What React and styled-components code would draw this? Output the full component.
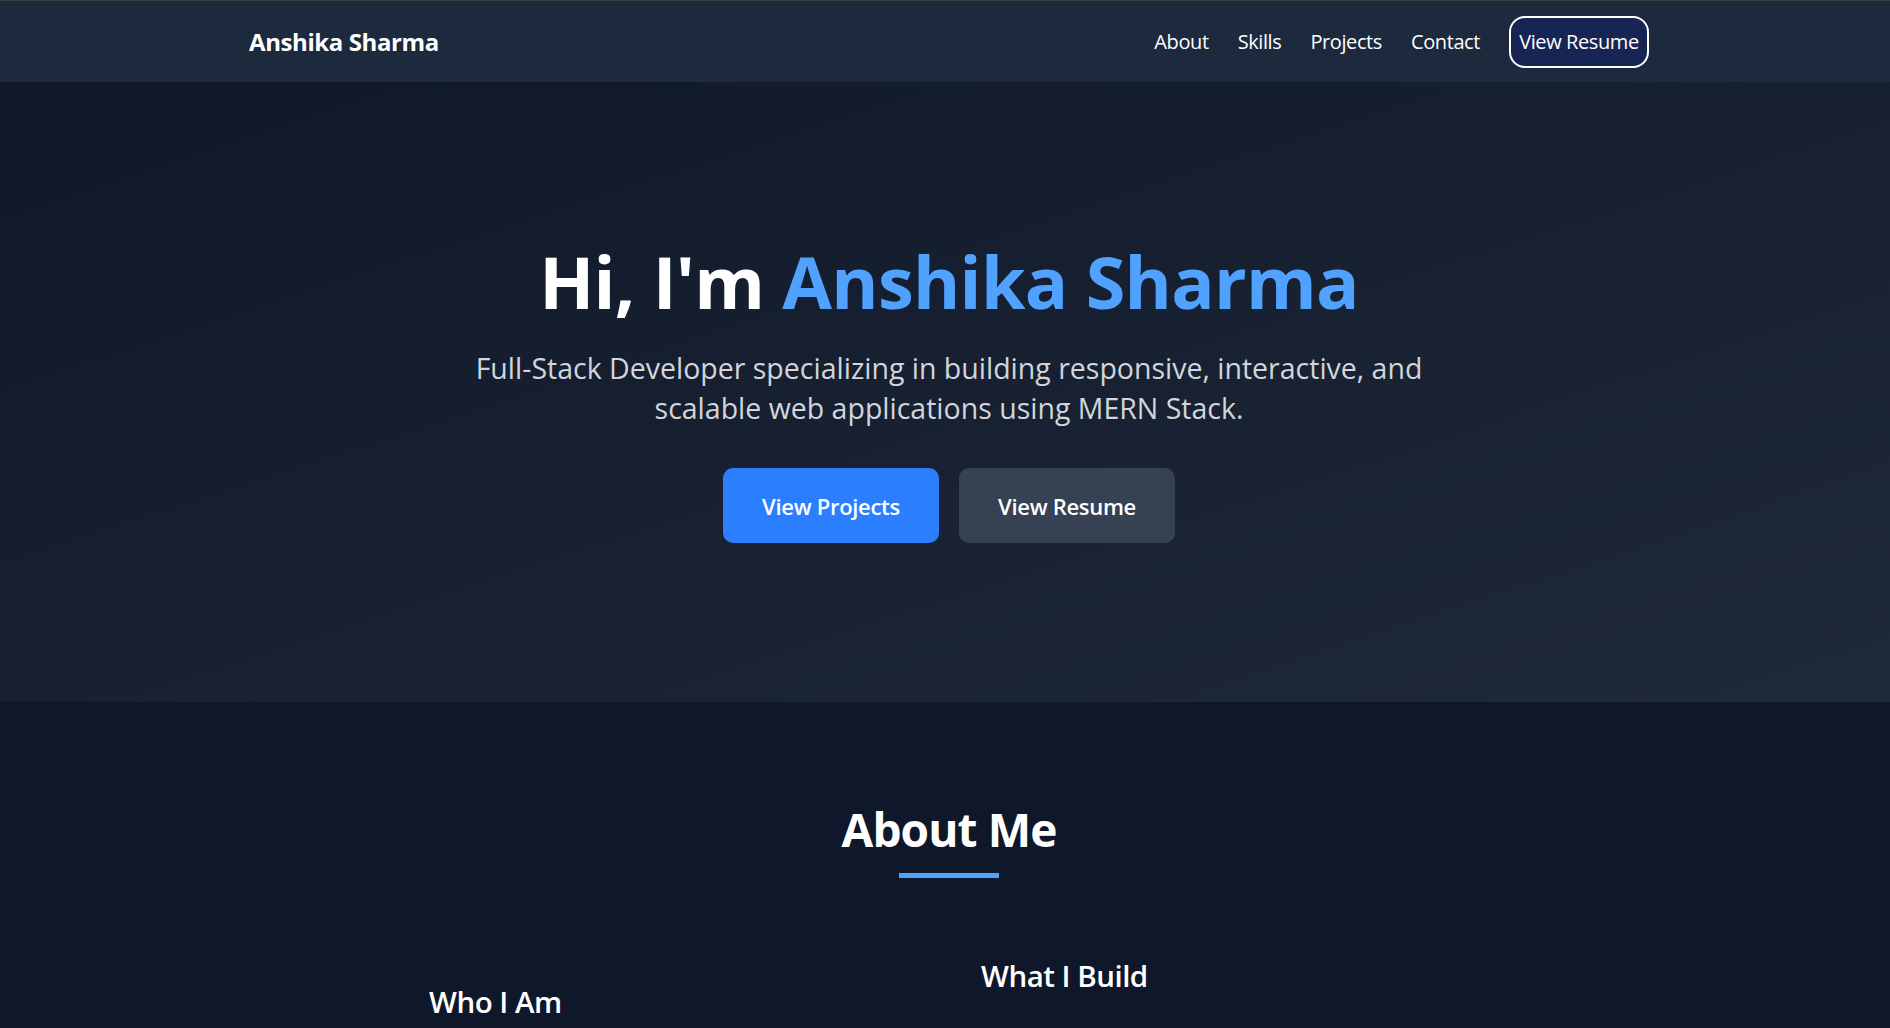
import React from 'react';
import styled, { createGlobalStyle } from 'styled-components';

const GlobalStyle = createGlobalStyle`
  * { box-sizing: border-box; }
  html, body {
    margin: 0;
    padding: 0;
    background: #0f172b;
    font-family: 'Open Sans', 'Noto Sans', sans-serif;
    color: #ffffff;
  }
`

const Navbar = styled.nav`
  height: 82px;
  background: #1d293d;
  border-top: 1px solid #3a3d44;
`

const NavInner = styled.div`
  max-width: 1408px;
  height: 100%;
  margin: 0 auto;
  padding-left: 8px;
  display: flex;
  align-items: center;
  justify-content: space-between;
`

const Brand = styled.div`
  font-size: 24px;
  font-weight: 700;
  letter-spacing: -0.4px;
`

const NavLinks = styled.div`
  display: flex;
  align-items: center;
  gap: 29px;
`

const NavLink = styled.a`
  color: #ffffff;
  font-size: 20px;
  text-decoration: none;
  letter-spacing: -0.4px;
`

const ResumeLink = styled.a`
  display: flex;
  align-items: center;
  justify-content: center;
  width: 140px;
  height: 52px;
  border: 2px solid #ffffff;
  border-radius: 16px;
  background: #172554;
  color: #ffffff;
  font-size: 20px;
  letter-spacing: -0.4px;
  text-decoration: none;
`

const Hero = styled.section`
  min-height: 620px;
  padding: 4px 0 0 8px;
  display: flex;
  flex-direction: column;
  align-items: center;
  justify-content: center;
  text-align: center;
  background: linear-gradient(to bottom right, #101828, #1e2939);
`

const HeroTitle = styled.h1`
  margin: 0;
  font-size: 72px;
  line-height: 1;
  font-weight: 700;
  letter-spacing: -0.7px;
`

const Accent = styled.span`
  color: #51a2ff;
`

const Subtitle = styled.p`
  margin: 31px 0 0;
  max-width: 1010px;
  font-size: 28.5px;
  line-height: 40px;
  color: #d1d5dc;
`

const ButtonRow = styled.div`
  display: flex;
  gap: 20px;
  margin-top: 40px;
`

const HeroButton = styled.a`
  display: flex;
  align-items: center;
  justify-content: center;
  width: 216px;
  height: 75px;
  border-radius: 10px;
  background: ${props => (props.primary ? '#2b7fff' : '#364153')};
  color: #ffffff;
  font-size: 22px;
  font-weight: 600;
  letter-spacing: -0.3px;
  text-decoration: none;
`

const About = styled.section`
  background: #0f172b;
  padding: 103px 0 80px 8px;
  display: flex;
  flex-direction: column;
  align-items: center;
`

const SectionTitle = styled.h2`
  margin: 0;
  font-size: 46px;
  line-height: 48px;
  font-weight: 700;
  letter-spacing: -0.9px;
`

const TitleBar = styled.div`
  width: 100px;
  height: 5px;
  margin-top: 20px;
  background: #51a2ff;
`

const AboutGrid = styled.div`
  width: 100%;
  max-width: 1040px;
  margin-top: 80px;
  display: grid;
  grid-template-columns: 1fr 1fr;
  gap: 64px;
`

const AboutColumn = styled.div`
  padding-top: ${props => props.offset || 0}px;
`

const ColumnTitle = styled.h3`
  margin: 0;
  font-size: 29.5px;
  line-height: 36px;
  font-weight: 600;
  letter-spacing: -0.5px;
`

export default function App() {
  return (
    <>
      <GlobalStyle />
      <Navbar>
        <NavInner>
          <Brand>Anshika Sharma</Brand>
          <NavLinks>
            <NavLink href="#about">About</NavLink>
            <NavLink href="#skills">Skills</NavLink>
            <NavLink href="#projects">Projects</NavLink>
            <NavLink href="#contact">Contact</NavLink>
            <ResumeLink href="#resume">View Resume</ResumeLink>
          </NavLinks>
        </NavInner>
      </Navbar>

      <Hero>
        <HeroTitle>
          Hi, I'm <Accent>Anshika Sharma</Accent>
        </HeroTitle>
        <Subtitle>
          Full-Stack Developer specializing in building responsive, interactive, and
          scalable web applications using MERN Stack.
        </Subtitle>
        <ButtonRow>
          <HeroButton primary href="#projects">View Projects</HeroButton>
          <HeroButton href="#resume">View Resume</HeroButton>
        </ButtonRow>
      </Hero>

      <About id="about">
        <SectionTitle>About Me</SectionTitle>
        <TitleBar />
        <AboutGrid>
          <AboutColumn offset={26}>
            <ColumnTitle>Who I Am</ColumnTitle>
          </AboutColumn>
          <AboutColumn>
            <ColumnTitle>What I Build</ColumnTitle>
          </AboutColumn>
        </AboutGrid>
      </About>
    </>
  );
}
